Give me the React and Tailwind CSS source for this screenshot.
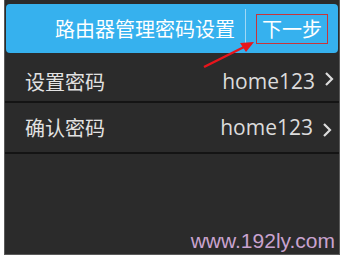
export default function App() {
  return (
    <div className="relative w-[345px] h-[259px] bg-white overflow-hidden" style={{ fontFamily: '"Open Sans", "Noto Sans CJK SC", sans-serif' }}>
      <div className="ml-[4px] w-[336px] h-[255px] bg-[#2b2b2b] border-l border-r border-b border-[#5a5a5a] flex flex-col">
        {/* header */}
        <div className="mt-[4px] mx-[1px] h-[49px] bg-[#36b1ee] rounded-[4px] flex items-center justify-end pr-[10px]">
          <span className="text-[20px] leading-none text-white" style={{ fontFamily: '"Noto Sans CJK SC", sans-serif' }}>路由器管理密码设置</span>
          <div className="w-px h-[40px] bg-[#9fd8f5] ml-[10px] mr-[10px]" />
          <div className="border border-[#c8353a] h-[30px] w-[72px] flex items-center justify-center">
            <span className="text-[20px] leading-none text-white" style={{ fontFamily: '"Noto Sans CJK SC", sans-serif' }}>下一步</span>
          </div>
        </div>
        {/* rows */}
        <div className="h-[50px] flex items-center border-b-2 border-[#141414] pl-[20px] pr-[5px] pt-[9px]">
          <span className="text-[20px] text-[#e2e2e2]" style={{ fontFamily: '"Noto Sans CJK SC", sans-serif' }}>设置密码</span>
          <span className="ml-auto text-[21px] text-[#dcdcdc]">home123</span>
          <svg width="10" height="16" viewBox="0 0 10 16" className="ml-[9px] mb-[6px]">
            <path d="M2 2 L8 8 L2 14" fill="none" stroke="#dcdcdc" strokeWidth="2.2" />
          </svg>
        </div>
        <div className="h-[51px] flex items-center border-b-2 border-[#141414] pl-[20px] pr-[7px]">
          <span className="text-[20px] text-[#e2e2e2]" style={{ fontFamily: '"Noto Sans CJK SC", sans-serif' }}>确认密码</span>
          <span className="ml-auto text-[21px] text-[#dcdcdc]">home123</span>
          <svg width="10" height="16" viewBox="0 0 10 16" className="ml-[9px] mt-[4px]">
            <path d="M2 2 L8 8 L2 14" fill="none" stroke="#dcdcdc" strokeWidth="2.2" />
          </svg>
        </div>
        <div className="flex-1 flex items-end justify-end pr-[4px] pb-[3px]">
          <span className="text-[21px] leading-none text-[#c9a3cf]" style={{ fontFamily: '"Liberation Sans", sans-serif' }}>www.192ly.com</span>
        </div>
      </div>
      {/* annotation arrow */}
      <svg className="absolute left-0 top-0" width="345" height="259" viewBox="0 0 345 259">
        <line x1="204" y1="67" x2="244" y2="47" stroke="#e8141b" strokeWidth="2.5" />
        <polygon points="254,42 240,43 246,52" fill="#e8141b" />
      </svg>
    </div>
  );
}
